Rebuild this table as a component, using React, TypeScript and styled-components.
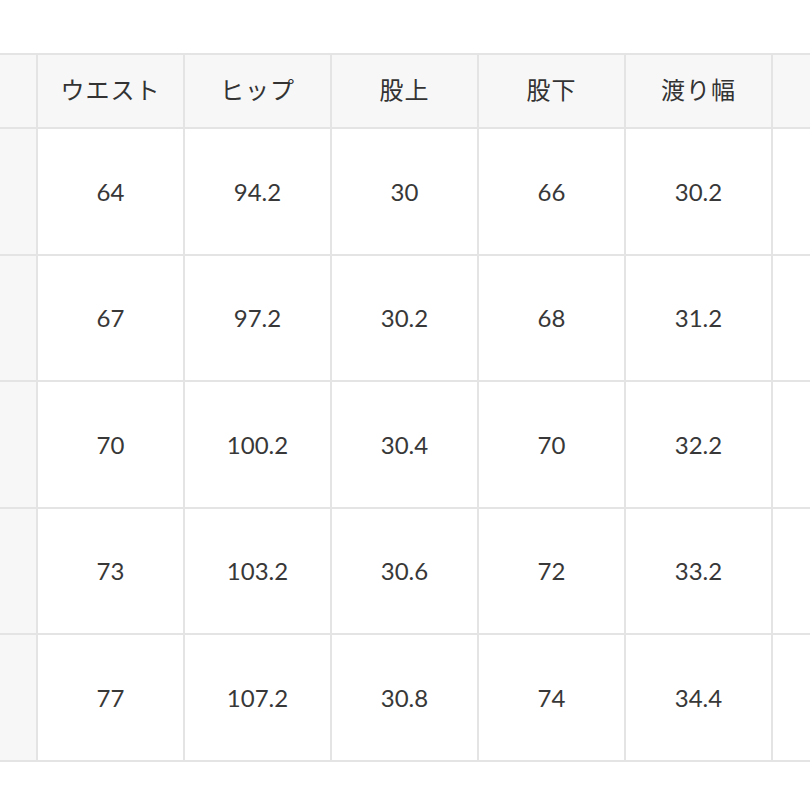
import React from 'react';
import styled, { createGlobalStyle } from 'styled-components';

const GlobalStyle = createGlobalStyle`
  html, body {
    margin: 0;
    padding: 0;
    background: #ffffff;
  }
  body {
    font-family: 'Lato', 'Noto Sans CJK JP', sans-serif;
    color: #2e2e2e;
  }
`;

const headers = ['ウエスト', 'ヒップ', '股上', '股下', '渡り幅'];

const rows: string[][] = [
  ['64', '94.2', '30', '66', '30.2'],
  ['67', '97.2', '30.2', '68', '31.2'],
  ['70', '100.2', '30.4', '70', '32.2'],
  ['73', '103.2', '30.6', '72', '33.2'],
  ['77', '107.2', '30.8', '74', '34.4'],
];

const App: React.FC = () => {
  return (
    <>
      <GlobalStyle />
      <Page>
        <SizeGrid>
          <Cell $shade />
          {headers.map(h => (
            <HeadCell key={h}>{h}</HeadCell>
          ))}
          <Cell $shade />
          {rows.map((row, i) => (
            <React.Fragment key={i}>
              <Cell $shade $body />
              {row.map((v, j) => (
                <Cell key={j} $body>
                  {v}
                </Cell>
              ))}
              <Cell $body />
            </React.Fragment>
          ))}
        </SizeGrid>
      </Page>
    </>
  );
};

export default App;

const Page = styled.div`
  width: 810px;
  height: 810px;
  overflow: hidden;
  padding-top: 53px;
  box-sizing: border-box;
`;

const SizeGrid = styled.div`
  display: grid;
  grid-template-columns: 36px repeat(5, 145px) 60px;
  grid-template-rows: 72px repeat(5, 124.5px);
  gap: 2px;
  padding: 2px 0;
  width: 840px;
  background: #e4e4e4;
`;

const Cell = styled.div<{ $shade?: boolean; $body?: boolean }>`
  display: flex;
  align-items: center;
  justify-content: center;
  background: ${p => (p.$shade || !p.$body ? '#f7f7f7' : '#ffffff')};
  font-family: 'Lato', 'Noto Sans CJK JP', sans-serif;
  font-size: 24px;
  font-weight: 400;
  color: #383838;
`;

const HeadCell = styled(Cell)`
  padding-bottom: 5px;
  font-family: 'Noto Sans CJK JP', sans-serif;
  font-size: 24px;
  font-weight: 400;
  letter-spacing: 1px;
  color: #333333;
`;
